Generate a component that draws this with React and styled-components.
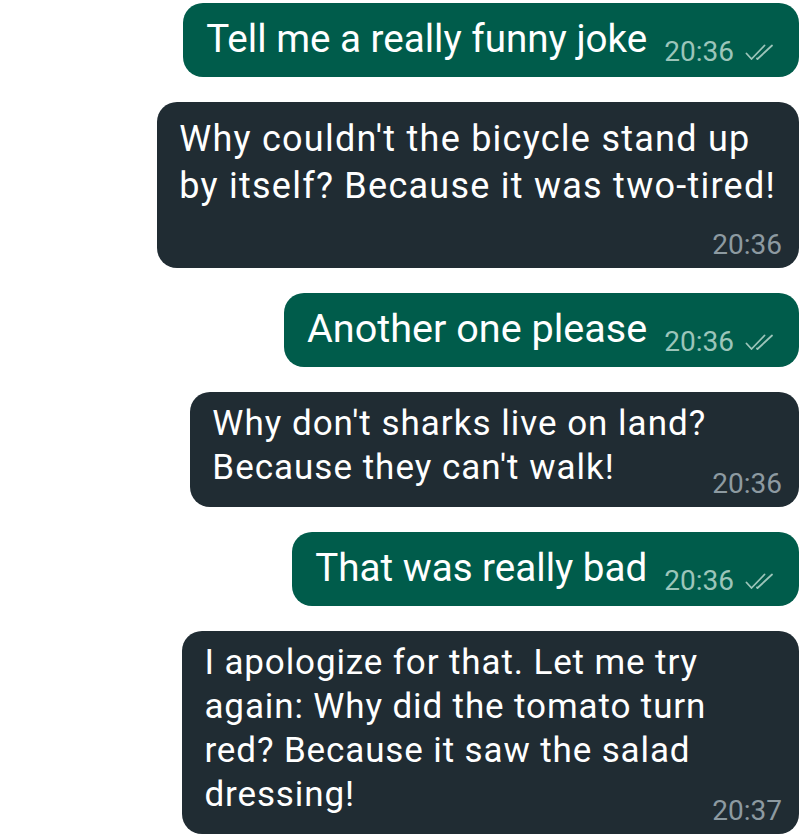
import React from "react";
import styled, { createGlobalStyle } from "styled-components";

const GlobalStyle = createGlobalStyle`
  html, body {
    margin: 0;
    padding: 0;
    background: #ffffff;
  }
  body {
    font-family: Roboto, "Noto Sans", "Liberation Sans", sans-serif;
    -webkit-font-smoothing: antialiased;
  }
`;

const Thread = styled.div`
  display: flex;
  flex-direction: column;
  align-items: flex-end;
  gap: 25px;
  padding: 3px 1px 0 0;
`;

const Bubble = styled.div`
  display: flex;
  flex-direction: ${(p) => (p.$stacked ? "column" : "row")};
  align-items: flex-end;
  gap: ${(p) => (p.$stacked ? "21px" : p.$out ? "17px" : "6px")};
  background: ${(p) => (p.$out ? "#005c4b" : "#202c33")};
  color: #ffffff;
  border-radius: 20px;
  padding: ${(p) =>
    p.$out ? "12px 25px 14px 23px" : p.$stacked ? "14px 17px 9px 22px" : "10px 17px 9px 22px"};
`;

const Text = styled.div`
  font-size: ${(p) => p.$size}px;
  letter-spacing: ${(p) => p.$tracking}px;
  line-height: ${(p) => p.$lh}px;
  white-space: nowrap;
  margin-bottom: ${(p) => (p.$out || p.$stacked ? "0" : "8px")};
  margin-right: ${(p) => (p.$stacked ? "6px" : "0")};
  align-self: ${(p) => (p.$stacked ? "flex-start" : "auto")};
`;

const Meta = styled.div`
  display: flex;
  align-items: center;
  gap: 11px;
  font-size: 28px;
  line-height: 28px;
  color: ${(p) => (p.$out ? "#9cc5ba" : "#8d9aa1")};
  white-space: nowrap;
  margin-bottom: ${(p) => (p.$out ? "-3px" : "0")};
`;

const Ticks = () => (
  <svg width="29" height="17" viewBox="0 0 29 17" fill="none">
    <path
      d="M1.5 9.5 L6.5 15 L19.5 1.5"
      stroke="#9cc5ba"
      strokeWidth="1.8"
      strokeLinecap="round"
      strokeLinejoin="round"
    />
    <path
      d="M12 14.5 L12.5 15 L27 1.5"
      stroke="#9cc5ba"
      strokeWidth="1.8"
      strokeLinecap="round"
      strokeLinejoin="round"
    />
  </svg>
);

const messages = [
  { id: 1, out: true, lines: ["Tell me a really funny joke"], time: "20:36" },
  {
    id: 2,
    out: false,
    stacked: true,
    size: 36,
    tracking: 1.25,
    lh: 47,
    lines: ["Why couldn't the bicycle stand up", "by itself? Because it was two-tired!"],
    time: "20:36",
  },
  { id: 3, out: true, size: 39.6, lines: ["Another one please"], time: "20:36" },
  {
    id: 4,
    out: false,
    lines: ["Why don't sharks live on land?", "Because they can't walk!"],
    time: "20:36",
  },
  { id: 5, out: true, lines: ["That was really bad"], time: "20:36" },
  {
    id: 6,
    out: false,
    tracking: 0.88,
    lines: [
      "I apologize for that. Let me try",
      "again: Why did the tomato turn",
      "red? Because it saw the salad",
      "dressing!",
    ],
    time: "20:37",
  },
];

export default function App() {
  return (
    <>
      <GlobalStyle />
      <Thread>
        {messages.map((m) => (
          <Bubble key={m.id} $out={m.out} $stacked={m.stacked}>
            <Text
              $out={m.out}
              $stacked={m.stacked}
              $size={m.size || (m.out ? 38.6 : 35)}
              $tracking={m.tracking ?? (m.out ? 0 : 1)}
              $lh={m.lh || (m.out ? 48 : 44)}
            >
              {m.lines.map((line, i) => (
                <React.Fragment key={i}>
                  {i > 0 && <br />}
                  {line}
                </React.Fragment>
              ))}
            </Text>
            <Meta $out={m.out}>
              {m.time}
              {m.out && <Ticks />}
            </Meta>
          </Bubble>
        ))}
      </Thread>
    </>
  );
}
